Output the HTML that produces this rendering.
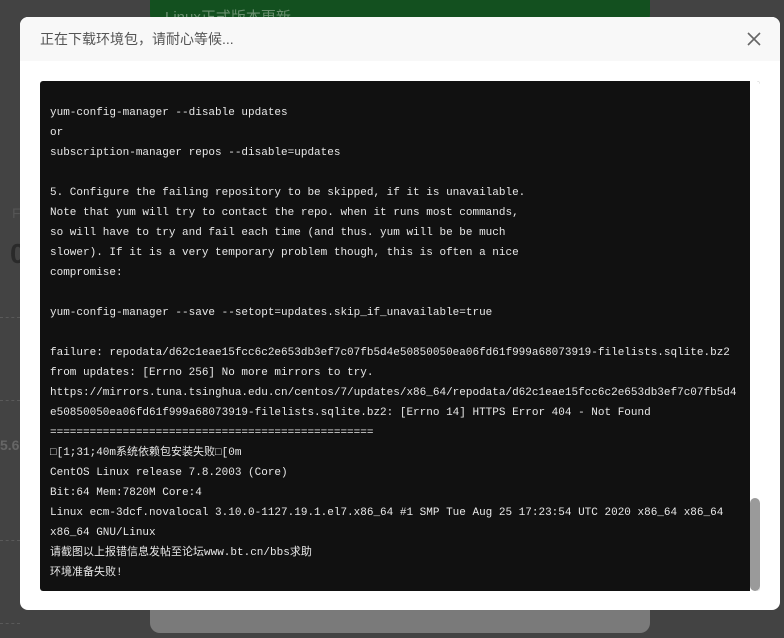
<!DOCTYPE html>
<html><head><meta charset="utf-8"><style>
*{margin:0;padding:0;box-sizing:border-box}
body{width:784px;height:638px;overflow:hidden;background:#434343;position:relative;font-family:"Liberation Sans","Noto Sans CJK SC",sans-serif}
.banner{position:absolute;left:150px;top:-20px;width:500px;height:50px;background:#13501f;border-radius:16px}
.banner span{position:absolute;left:15px;top:26px;color:#6a8f6f;font-size:15px}
.grey{position:absolute;left:150px;top:580px;width:500px;height:53px;background:#7a7a7a;border-radius:0 0 10px 10px}
.lt{position:absolute;color:#2a2a2a;font-weight:bold}
.dash{position:absolute;left:0;width:20px;border-top:1px dashed #5a5a5a}
.modal{position:absolute;left:20px;top:17px;width:760px;height:593px;background:#fff;border-radius:8px;overflow:hidden}
.hd{height:44px;background:#f8f8f8;color:#555;font-size:14px;line-height:44px;padding-left:20px}
.x{position:absolute;left:727px;top:15px;width:14px;height:14px}
.term{position:absolute;left:20px;top:64px;width:720px;height:510px;background:#111;border-radius:3px;overflow:hidden}
.sb{position:absolute;right:0;top:0;width:10px;height:100%;background:#fff}
.th{position:absolute;right:0;top:417px;width:10px;height:93px;background:#9a9a9a;border-radius:5px}
pre{position:absolute;left:10px;top:22px;color:#e8e8e8;font-family:"Liberation Mono","Noto Sans CJK SC",monospace;font-size:11px;line-height:20px;white-space:pre}
</style></head><body>
<div class="banner"><span>Linux正式版本更新</span></div>
<div class="grey"></div>
<div class="lt" style="left:12px;top:205px;font-size:14px;color:#555;font-weight:normal">F</div>
<div class="lt" style="left:10px;top:238px;font-size:28px">0</div>
<div class="lt" style="left:0;top:437px;font-size:14px;color:#666">5.6</div>
<div class="dash" style="top:317px"></div><div class="dash" style="top:400px"></div><div class="dash" style="top:540px"></div><div class="dash" style="top:623px"></div>
<div class="modal">
<div class="hd">正在下载环境包，请耐心等候...</div>
<svg class="x" viewBox="0 0 14 14"><path d="M1 1L13 13M13 1L1 13" stroke="#666" stroke-width="1.6" fill="none"/></svg>
<div class="term"><pre>
yum-config-manager --disable updates
or
subscription-manager repos --disable=updates

5. Configure the failing repository to be skipped, if it is unavailable.
Note that yum will try to contact the repo. when it runs most commands,
so will have to try and fail each time (and thus. yum will be be much
slower). If it is a very temporary problem though, this is often a nice
compromise:

yum-config-manager --save --setopt=updates.skip_if_unavailable=true

failure: repodata/d62c1eae15fcc6c2e653db3ef7c07fb5d4e50850050ea06fd61f999a68073919-filelists.sqlite.bz2
from updates: [Errno 256] No more mirrors to try.
https://mirrors.tuna.tsinghua.edu.cn/centos/7/updates/x86_64/repodata/d62c1eae15fcc6c2e653db3ef7c07fb5d4
e50850050ea06fd61f999a68073919-filelists.sqlite.bz2: [Errno 14] HTTPS Error 404 - Not Found
=================================================
&#9633;[1;31;40m系统依赖包安装失败&#9633;[0m
CentOS Linux release 7.8.2003 (Core)
Bit:64 Mem:7820M Core:4
Linux ecm-3dcf.novalocal 3.10.0-1127.19.1.el7.x86_64 #1 SMP Tue Aug 25 17:23:54 UTC 2020 x86_64 x86_64
x86_64 GNU/Linux
请截图以上报错信息发帖至论坛www.bt.cn/bbs求助
环境准备失败!</pre>
<div class="sb"></div><div class="th"></div></div>
</div>
</body></html>
